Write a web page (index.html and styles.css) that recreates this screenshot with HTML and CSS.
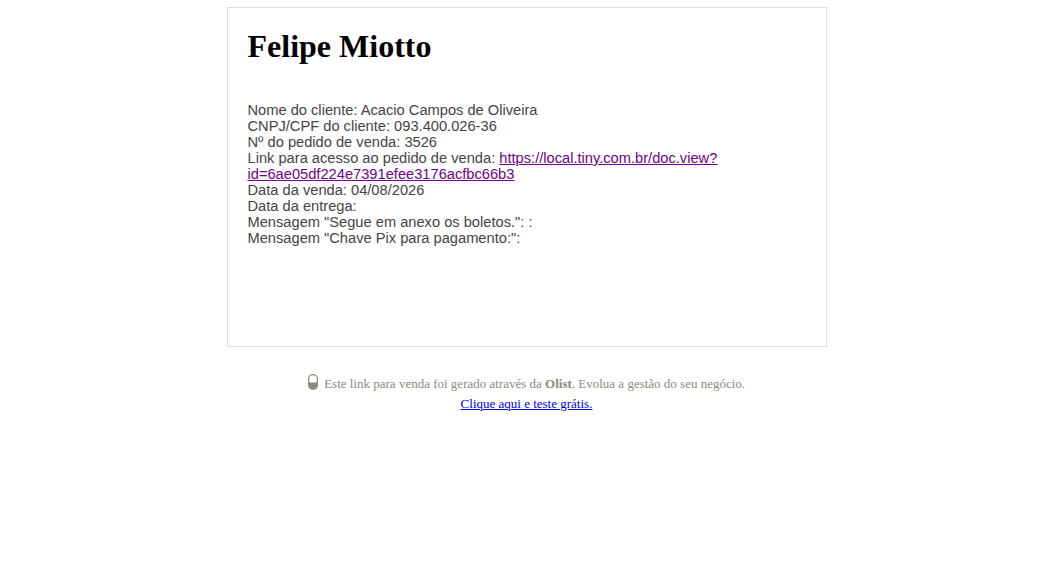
FILE: index.html
```html
<!DOCTYPE html>
<html lang="pt-BR">
<head>
    <meta charset="UTF-8">
    <title>Felipe Miotto</title>
    <link rel="stylesheet" href="styles.css">
</head>
<body>

<div class="card">
    <h1 class="card-title">Felipe Miotto</h1>
    <div class="card-text">
        Nome do cliente: Acacio Campos de Oliveira<br>
        CNPJ/CPF do cliente: 093.400.026-36<br>
        Nº do pedido de venda: 3526<br>
        Link para acesso ao pedido de venda: <a class="doc-link" href="#doc">https://local.tiny.com.br/doc.view?id=6ae05df224e7391efee3176acfbc66b3</a><br>
        Data da venda: 04/08/2026<br>
        Data da entrega:<br>
        Mensagem "Segue em anexo os boletos.": :<br>
        Mensagem "Chave Pix para pagamento:":
    </div>
</div>

<div class="footer">
    <p class="footer-line">
        <svg class="olist-icon" width="10" height="16" viewBox="0 0 10 16">
            <rect x="0" y="0" width="10" height="16" rx="5" fill="#8c8a7c"/>
            <path d="M1.2 5 a3.8 3.8 0 0 1 7.6 0 v2.5 a1 1 0 0 1 -1 1 h-5.6 a1 1 0 0 1 -1 -1 z" fill="#fff"/>
        </svg>
        Este link para venda foi gerado através da <b>Olist</b>. Evolua a gestão do seu negócio.
    </p>
    <a class="footer-link" href="#olist">Clique aqui e teste grátis.</a>
</div>

</body>
</html>
```

FILE: styles.css
```css
body {
    margin: 0;
    padding-left: 2px;
    background-color: #ffffff;
    font-family: "Liberation Serif", "Times New Roman", serif;
}
.card {
    box-sizing: border-box;
    width: 600px;
    height: 340px;
    margin: 7px auto 0;
    padding: 20px;
    border: 1px solid #dddddd;
}
.card-title {
    margin: 0;
    font-size: 32px;
    line-height: 37px;
    color: #000000;
}
.card-text {
    width: 480px;
    margin-top: 37px;
    font-family: "Liberation Sans", Arial, sans-serif;
    font-size: 14.67px;
    line-height: 16px;
    color: #444444;
}
.doc-link {
    color: #70008c;
}
.footer {
    margin-top: 27px;
    text-align: center;
    font-size: 13px;
    color: #8c8a7c;
}
.footer-line {
    margin: 0 0 2px;
    line-height: 20px;
}
.olist-icon {
    margin-right: 3px;
    vertical-align: -2px;
}
.footer-link {
    color: #0000ee;
    line-height: 16px;
}
```
